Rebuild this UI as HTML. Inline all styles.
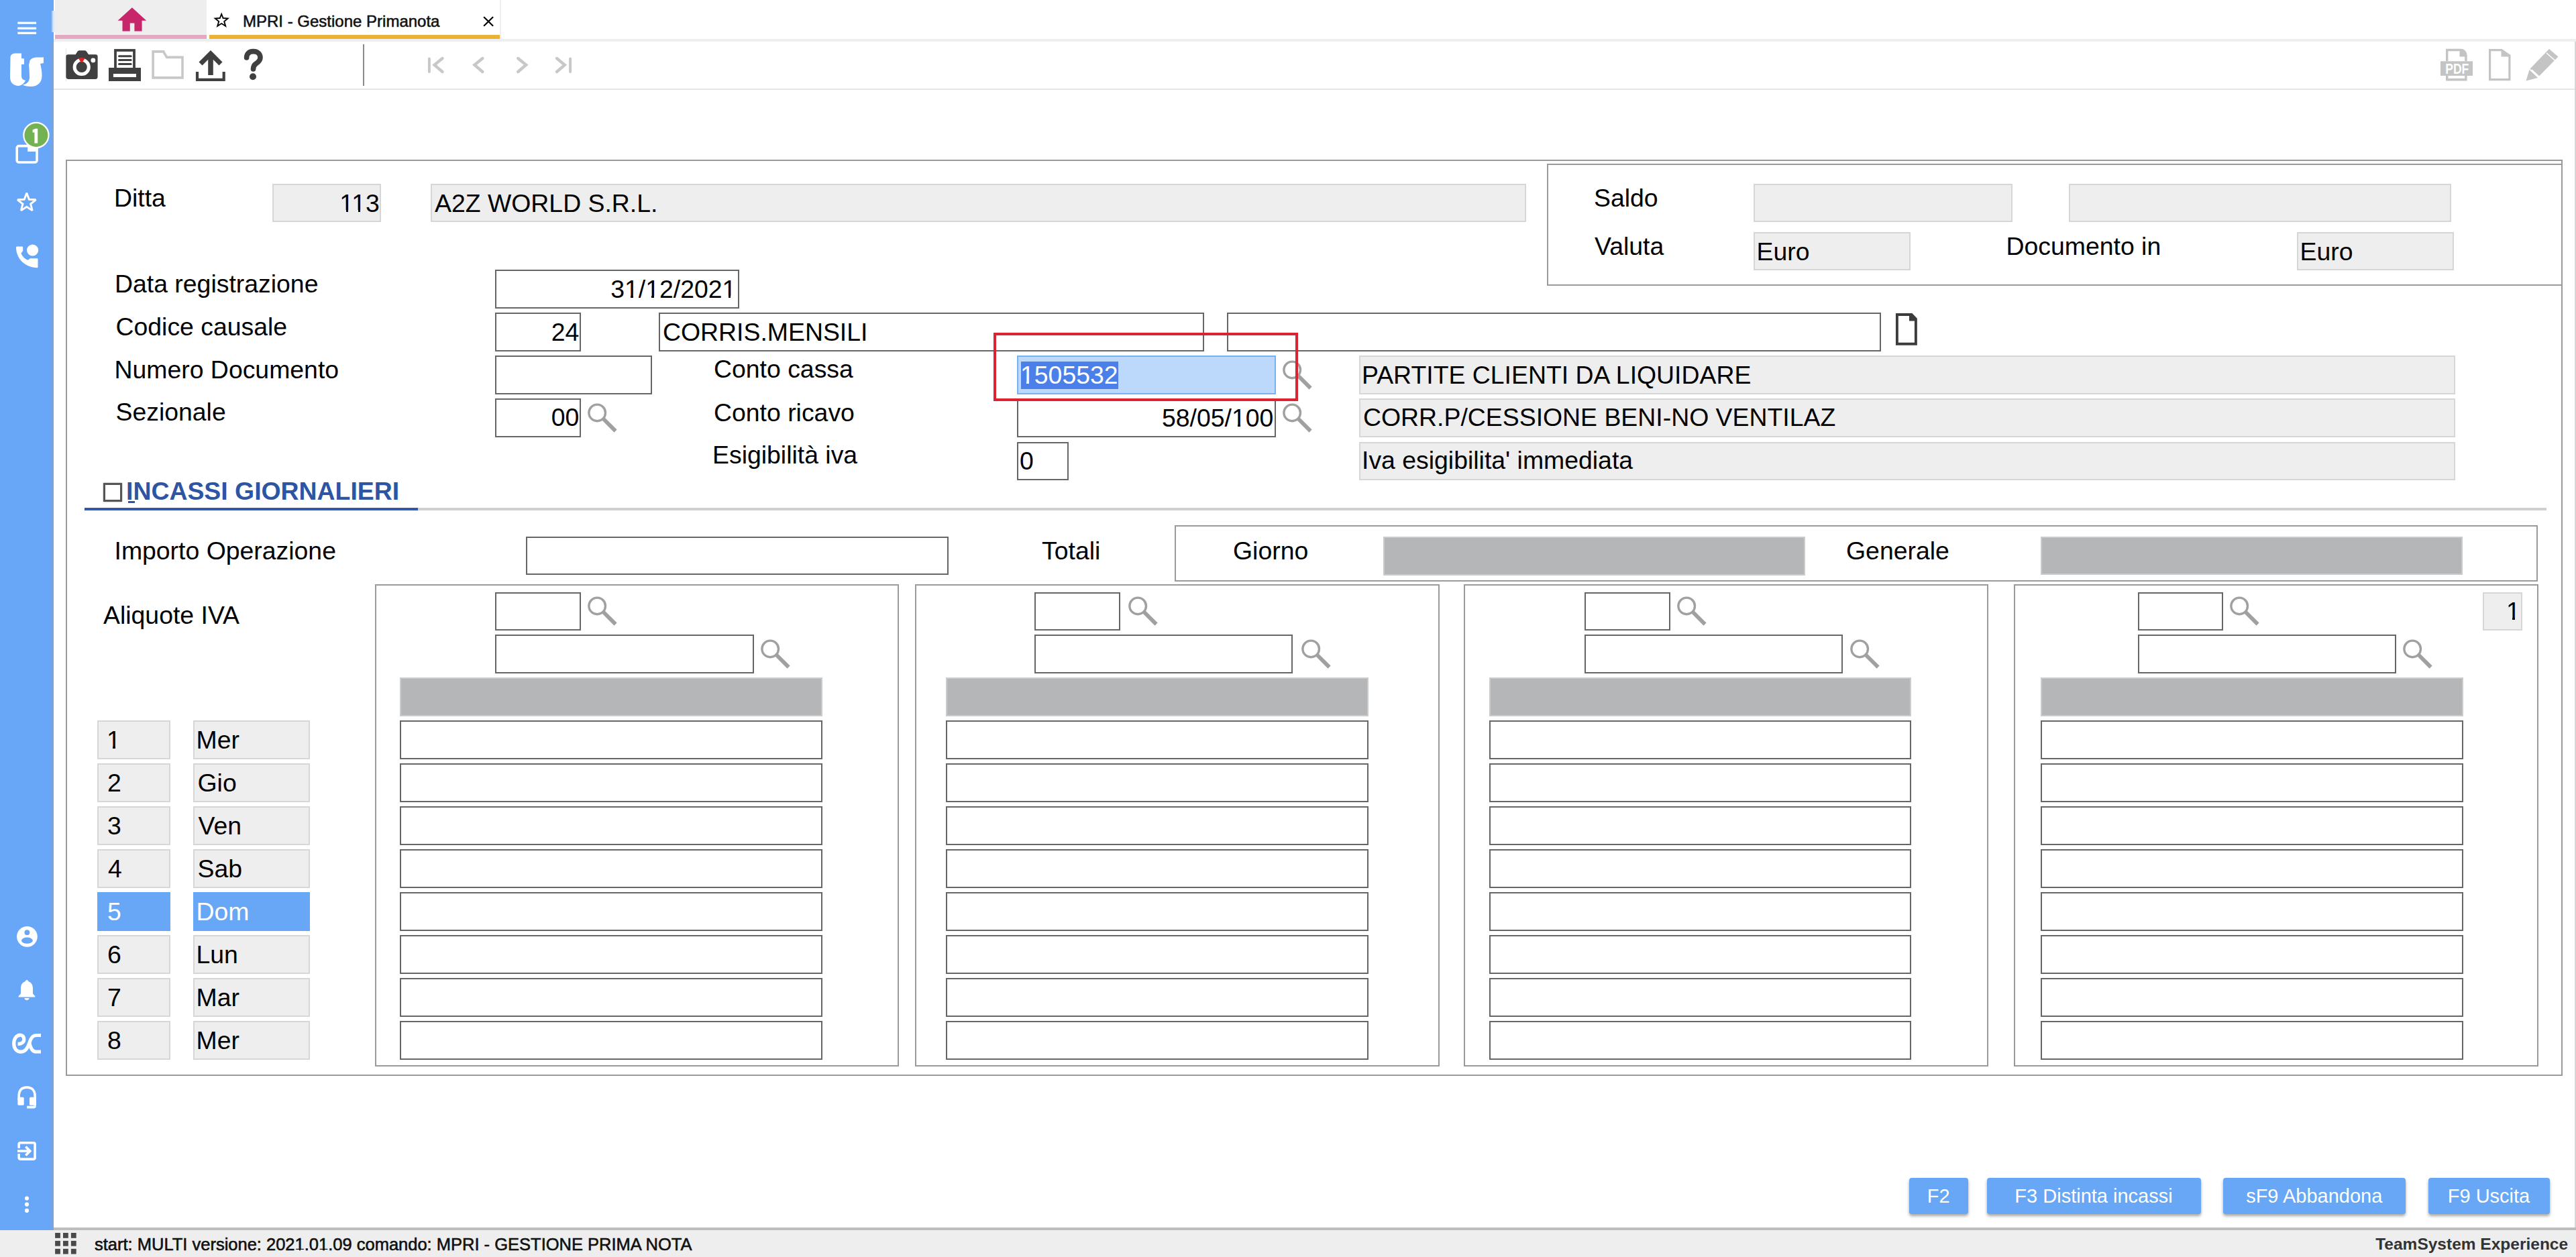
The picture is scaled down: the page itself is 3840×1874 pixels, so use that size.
<!DOCTYPE html><html><head><meta charset="utf-8"><style>
html,body{margin:0;padding:0;width:3840px;height:1874px;overflow:hidden;background:#fff;position:relative;font-family:"Liberation Sans",sans-serif}
div{position:absolute;box-sizing:border-box}
.t{white-space:pre;line-height:1}
.ig{background:#eeeeee;border:2px solid #d6d6d6}
.iw{background:#fff;border:2px solid #666}
.gb{background:#b4b6b7;border:2px solid #c9cbcc}
.pn{border:2px solid #9a9a9a}
.btn{background:#68a6f6;border-radius:4px;box-shadow:0 3px 4px rgba(0,0,0,0.35);color:#fff;font-size:29px;text-align:center;line-height:54px}
</style></head><body>
<div class="" style="left:0.0px;top:0.0px;width:80.0px;height:1834.0px;background:#68a6f7"></div>
<div class="" style="left:74.0px;top:62.0px;width:6.0px;height:1772.0px;background:linear-gradient(to right,rgba(104,166,247,0),#7ea4d2)"></div>
<div class="" style="left:76.0px;top:16.0px;width:6.0px;height:32.0px;background:linear-gradient(to right,#6aa6f3,#dceafa 60%,#eeeeee)"></div>
<div class="" style="left:80.0px;top:58.0px;width:3760.0px;height:4.0px;background:#eeeeee"></div>
<div class="" style="left:82.0px;top:0.0px;width:226.0px;height:58.0px;background:#eeeeee"></div>
<div class="" style="left:82.0px;top:52.0px;width:226.0px;height:6.0px;background:#e3a9c1"></div>
<div class="" style="left:312.0px;top:52.0px;width:434.0px;height:6.0px;background:#ebb233"></div>
<div class="" style="left:745.0px;top:0.0px;width:2.0px;height:58.0px;background:#efefef"></div>
<div class="" style="left:98.0px;top:72.0px;width:1.0px;height:49.0px;background:#e4e4e4"></div>
<div class="" style="left:80.0px;top:132.0px;width:3760.0px;height:2.0px;background:#e6e6e6"></div>
<div class="" style="left:541.0px;top:66.0px;width:2.0px;height:62.0px;background:#8a8a8a"></div>
<div class="" style="left:3837.5px;top:62.0px;width:2.5px;height:1769.0px;background:#d6d6d6"></div>
<div class="" style="left:0.0px;top:1833.5px;width:3840.0px;height:40.5px;background:#eeeeee"></div>
<div class="" style="left:80.0px;top:1830.0px;width:3760.0px;height:3.5px;background:#bdbdbd"></div>
<div class="pn" style="left:98.0px;top:238.0px;width:3722.0px;height:1366.0px;"></div>
<div class="pn" style="left:2306.0px;top:244.0px;width:1514.0px;height:182.0px;"></div>
<div class="t" style="left:170.0px;top:277.3px;font-size:37.4px;color:#000;font-weight:normal;">Ditta</div>
<div class="ig" style="left:406.0px;top:274.0px;width:162.0px;height:57.0px;"></div>
<div class="t" style="right:3274.2px;top:284.8px;font-size:37.4px;color:#000;font-weight:normal;">113</div>
<div style="left:507.87px;top:312.78px;width:7.67px;height:3.55px;background:#eeeeee"></div>
<div style="left:518.90px;top:312.78px;width:8.23px;height:3.55px;background:#eeeeee"></div>
<div style="left:525.89px;top:312.78px;width:7.67px;height:3.55px;background:#eeeeee"></div>
<div style="left:536.92px;top:312.78px;width:8.23px;height:3.55px;background:#eeeeee"></div>
<div class="ig" style="left:642.0px;top:274.0px;width:1633.0px;height:57.0px;"></div>
<div class="t" style="left:648.0px;top:284.8px;font-size:37.4px;color:#000;font-weight:normal;">A2Z WORLD S.R.L.</div>
<div class="t" style="left:2376.0px;top:276.8px;font-size:37.4px;color:#000;font-weight:normal;">Saldo</div>
<div class="t" style="left:2377.0px;top:348.8px;font-size:37.4px;color:#000;font-weight:normal;">Valuta</div>
<div class="ig" style="left:2614.0px;top:274.0px;width:386.0px;height:57.0px;"></div>
<div class="ig" style="left:3084.0px;top:274.0px;width:570.0px;height:57.0px;"></div>
<div class="ig" style="left:2614.0px;top:346.0px;width:234.0px;height:57.0px;"></div>
<div class="t" style="left:2618.5px;top:356.8px;font-size:37.4px;color:#000;font-weight:normal;">Euro</div>
<div class="t" style="left:2990.5px;top:348.8px;font-size:37.4px;color:#000;font-weight:normal;">Documento in</div>
<div class="ig" style="left:3424.0px;top:346.0px;width:234.0px;height:57.0px;"></div>
<div class="t" style="left:3428.5px;top:356.8px;font-size:37.4px;color:#000;font-weight:normal;">Euro</div>
<div class="t" style="left:171.0px;top:404.8px;font-size:37.4px;color:#000;font-weight:normal;">Data registrazione</div>
<div class="iw" style="left:738.0px;top:402.0px;width:364.0px;height:57.5px;"></div>
<div class="t" style="right:2742.7px;top:412.8px;font-size:37.4px;color:#000;font-weight:normal;">31/12/2021</div>
<div style="left:932.64px;top:440.78px;width:7.67px;height:3.55px;background:#fff"></div>
<div style="left:943.67px;top:440.78px;width:8.23px;height:3.55px;background:#fff"></div>
<div style="left:963.82px;top:440.78px;width:7.67px;height:3.55px;background:#fff"></div>
<div style="left:974.85px;top:440.78px;width:8.23px;height:3.55px;background:#fff"></div>
<div style="left:1078.18px;top:440.78px;width:7.67px;height:3.55px;background:#fff"></div>
<div style="left:1089.22px;top:440.78px;width:8.23px;height:3.55px;background:#fff"></div>
<div class="t" style="left:172.5px;top:468.8px;font-size:37.4px;color:#000;font-weight:normal;">Codice causale</div>
<div class="iw" style="left:738.0px;top:466.0px;width:128.0px;height:57.5px;"></div>
<div class="t" style="right:2976.7px;top:476.8px;font-size:37.4px;color:#000;font-weight:normal;">24</div>
<div class="iw" style="left:982.0px;top:466.0px;width:813.0px;height:57.5px;"></div>
<div class="t" style="left:988.0px;top:476.8px;font-size:37.4px;color:#000;font-weight:normal;">CORRIS.MENSILI</div>
<div class="iw" style="left:1828.5px;top:466.0px;width:975.0px;height:57.5px;"></div>
<div class="t" style="left:170.5px;top:532.8px;font-size:37.4px;color:#000;font-weight:normal;">Numero Documento</div>
<div class="iw" style="left:738.0px;top:530.0px;width:233.5px;height:57.5px;"></div>
<div class="t" style="left:1064.0px;top:532.3px;font-size:37.4px;color:#000;font-weight:normal;">Conto cassa</div>
<div class="" style="left:1516.0px;top:530.0px;width:385.5px;height:57.5px;background:#bcd8fb;border:2px solid #78b0f4"></div>
<div class="" style="left:1522.0px;top:538.5px;width:145.0px;height:41.5px;background:#4a80e8"></div>
<div class="t" style="left:1521.0px;top:540.8px;font-size:37.4px;color:#fff;font-weight:normal;">1505532</div>
<div style="left:1522.68px;top:568.78px;width:7.67px;height:3.55px;background:#4a80e8"></div>
<div style="left:1533.72px;top:568.78px;width:8.23px;height:3.55px;background:#4a80e8"></div>
<svg viewBox="0 0 44 44" width="44" height="44" style="position:absolute;left:1912px;top:537px"><circle cx="14.2" cy="14.4" r="12.3" fill="none" stroke="#a0a0a0" stroke-width="3.4"/><line x1="23.5" y1="23.5" x2="41.6" y2="41.6" stroke="#a0a0a0" stroke-width="5.8"/></svg>
<div class="ig" style="left:2026.0px;top:530.0px;width:1633.5px;height:57.5px;"></div>
<div class="t" style="left:2030.0px;top:541.1px;font-size:37.4px;color:#000;font-weight:normal;">PARTITE CLIENTI DA LIQUIDARE</div>
<div class="t" style="left:172.5px;top:596.3px;font-size:37.4px;color:#000;font-weight:normal;">Sezionale</div>
<div class="iw" style="left:738.0px;top:594.0px;width:128.0px;height:57.5px;"></div>
<div class="t" style="right:2976.7px;top:604.3px;font-size:37.4px;color:#000;font-weight:normal;">00</div>
<svg viewBox="0 0 44 44" width="44" height="44" style="position:absolute;left:876px;top:601px"><circle cx="14.2" cy="14.4" r="12.3" fill="none" stroke="#a0a0a0" stroke-width="3.4"/><line x1="23.5" y1="23.5" x2="41.6" y2="41.6" stroke="#a0a0a0" stroke-width="5.8"/></svg>
<div class="t" style="left:1064.0px;top:596.6px;font-size:37.4px;color:#000;font-weight:normal;">Conto ricavo</div>
<div class="iw" style="left:1516.0px;top:594.0px;width:385.5px;height:57.5px;"></div>
<div class="t" style="right:1941.7px;top:604.8px;font-size:37.4px;color:#000;font-weight:normal;">58/05/100</div>
<div style="left:1837.59px;top:632.78px;width:7.67px;height:3.55px;background:#fff"></div>
<div style="left:1848.63px;top:632.78px;width:8.23px;height:3.55px;background:#fff"></div>
<svg viewBox="0 0 44 44" width="44" height="44" style="position:absolute;left:1912px;top:601px"><circle cx="14.2" cy="14.4" r="12.3" fill="none" stroke="#a0a0a0" stroke-width="3.4"/><line x1="23.5" y1="23.5" x2="41.6" y2="41.6" stroke="#a0a0a0" stroke-width="5.8"/></svg>
<div class="ig" style="left:2026.0px;top:594.0px;width:1633.5px;height:57.5px;"></div>
<div class="t" style="left:2032.0px;top:604.3px;font-size:37.4px;color:#000;font-weight:normal;">CORR.P/CESSIONE BENI-NO VENTILAZ</div>
<div class="t" style="left:1062.0px;top:660.3px;font-size:37.4px;color:#000;font-weight:normal;">Esigibilità iva</div>
<div class="iw" style="left:1516.0px;top:658.5px;width:77.0px;height:57.5px;"></div>
<div class="t" style="left:1520.0px;top:668.8px;font-size:37.4px;color:#000;font-weight:normal;">0</div>
<div class="ig" style="left:2026.0px;top:658.5px;width:1633.5px;height:57.5px;"></div>
<div class="t" style="left:2030.0px;top:668.1px;font-size:37.4px;color:#000;font-weight:normal;">Iva esigibilita' immediata</div>
<div class="" style="left:1481.0px;top:496.0px;width:454.0px;height:101.5px;border:4px solid #dc2430"></div>
<svg viewBox="0 0 34 48" width="34" height="48" style="position:absolute;left:2825px;top:467px"><path d="M2.9 2 L24.6 2 L30.9 8.5 L30.9 45.8 L2.9 45.8 Z" fill="#fff" stroke="#3c3c3c" stroke-width="3.9"/><path d="M21 0.5 L21 11.6 L32.5 11.6 Z" fill="#3c3c3c"/></svg>
<div class="" style="left:154.0px;top:720.0px;width:28.0px;height:27.5px;border:3px solid #555;box-shadow:0 0 2px rgba(0,0,0,.4)"></div>
<div class="t" style="left:188.0px;top:713.5px;font-size:37.4px;color:#2d55a3;font-weight:bold;">INCASSI GIORNALIERI</div>
<div class="" style="left:191.0px;top:746.5px;width:9.5px;height:3.0px;background:#2d55a3"></div>
<div class="" style="left:623.0px;top:757.0px;width:3173.0px;height:3.5px;background:#cfcfcf"></div>
<div class="" style="left:126.0px;top:757.0px;width:497.0px;height:4.0px;background:#3458a4"></div>
<div class="t" style="left:170.5px;top:803.1px;font-size:37.4px;color:#000;font-weight:normal;">Importo Operazione</div>
<div class="iw" style="left:784.0px;top:800.0px;width:630.0px;height:57.0px;"></div>
<div class="t" style="left:1553.0px;top:803.3px;font-size:37.4px;color:#000;font-weight:normal;">Totali</div>
<div class="pn" style="left:1750.5px;top:782.5px;width:2032.5px;height:84.5px;"></div>
<div class="t" style="left:1838.0px;top:802.8px;font-size:37.4px;color:#000;font-weight:normal;">Giorno</div>
<div class="gb" style="left:2062.0px;top:800.0px;width:629.0px;height:58.0px;"></div>
<div class="t" style="left:2752.0px;top:802.8px;font-size:37.4px;color:#000;font-weight:normal;">Generale</div>
<div class="gb" style="left:3042.0px;top:800.0px;width:629.0px;height:57.0px;"></div>
<div class="t" style="left:154.0px;top:898.8px;font-size:37.4px;color:#000;font-weight:normal;">Aliquote IVA</div>
<div class="pn" style="left:558.5px;top:870.5px;width:781.5px;height:719.0px;"></div>
<div class="iw" style="left:738.0px;top:882.5px;width:127.5px;height:57.0px;"></div>
<svg viewBox="0 0 44 44" width="44" height="44" style="position:absolute;left:876px;top:888.5px"><circle cx="14.2" cy="14.4" r="12.3" fill="none" stroke="#a0a0a0" stroke-width="3.4"/><line x1="23.5" y1="23.5" x2="41.6" y2="41.6" stroke="#a0a0a0" stroke-width="5.8"/></svg>
<div class="iw" style="left:738.0px;top:946.0px;width:385.5px;height:57.5px;"></div>
<svg viewBox="0 0 44 44" width="44" height="44" style="position:absolute;left:1134px;top:953px"><circle cx="14.2" cy="14.4" r="12.3" fill="none" stroke="#a0a0a0" stroke-width="3.4"/><line x1="23.5" y1="23.5" x2="41.6" y2="41.6" stroke="#a0a0a0" stroke-width="5.8"/></svg>
<div class="gb" style="left:596.0px;top:1009.5px;width:630.0px;height:58.3px;"></div>
<div class="iw" style="left:596.0px;top:1074.2px;width:630.0px;height:57.5px;"></div>
<div class="iw" style="left:596.0px;top:1138.2px;width:630.0px;height:57.5px;"></div>
<div class="iw" style="left:596.0px;top:1202.2px;width:630.0px;height:57.5px;"></div>
<div class="iw" style="left:596.0px;top:1266.2px;width:630.0px;height:57.5px;"></div>
<div class="iw" style="left:596.0px;top:1330.2px;width:630.0px;height:57.5px;"></div>
<div class="iw" style="left:596.0px;top:1394.2px;width:630.0px;height:57.5px;"></div>
<div class="iw" style="left:596.0px;top:1458.2px;width:630.0px;height:57.5px;"></div>
<div class="iw" style="left:596.0px;top:1522.2px;width:630.0px;height:57.5px;"></div>
<div class="pn" style="left:1363.5px;top:870.5px;width:782.5px;height:719.0px;"></div>
<div class="iw" style="left:1542.0px;top:882.5px;width:127.5px;height:57.0px;"></div>
<svg viewBox="0 0 44 44" width="44" height="44" style="position:absolute;left:1681.5px;top:888.5px"><circle cx="14.2" cy="14.4" r="12.3" fill="none" stroke="#a0a0a0" stroke-width="3.4"/><line x1="23.5" y1="23.5" x2="41.6" y2="41.6" stroke="#a0a0a0" stroke-width="5.8"/></svg>
<div class="iw" style="left:1542.0px;top:946.0px;width:385.0px;height:57.5px;"></div>
<svg viewBox="0 0 44 44" width="44" height="44" style="position:absolute;left:1940px;top:953px"><circle cx="14.2" cy="14.4" r="12.3" fill="none" stroke="#a0a0a0" stroke-width="3.4"/><line x1="23.5" y1="23.5" x2="41.6" y2="41.6" stroke="#a0a0a0" stroke-width="5.8"/></svg>
<div class="gb" style="left:1409.5px;top:1009.5px;width:630.5px;height:58.3px;"></div>
<div class="iw" style="left:1409.5px;top:1074.2px;width:630.5px;height:57.5px;"></div>
<div class="iw" style="left:1409.5px;top:1138.2px;width:630.5px;height:57.5px;"></div>
<div class="iw" style="left:1409.5px;top:1202.2px;width:630.5px;height:57.5px;"></div>
<div class="iw" style="left:1409.5px;top:1266.2px;width:630.5px;height:57.5px;"></div>
<div class="iw" style="left:1409.5px;top:1330.2px;width:630.5px;height:57.5px;"></div>
<div class="iw" style="left:1409.5px;top:1394.2px;width:630.5px;height:57.5px;"></div>
<div class="iw" style="left:1409.5px;top:1458.2px;width:630.5px;height:57.5px;"></div>
<div class="iw" style="left:1409.5px;top:1522.2px;width:630.5px;height:57.5px;"></div>
<div class="pn" style="left:2182.0px;top:870.5px;width:781.5px;height:719.0px;"></div>
<div class="iw" style="left:2362.0px;top:882.5px;width:127.5px;height:57.0px;"></div>
<svg viewBox="0 0 44 44" width="44" height="44" style="position:absolute;left:2500px;top:888.5px"><circle cx="14.2" cy="14.4" r="12.3" fill="none" stroke="#a0a0a0" stroke-width="3.4"/><line x1="23.5" y1="23.5" x2="41.6" y2="41.6" stroke="#a0a0a0" stroke-width="5.8"/></svg>
<div class="iw" style="left:2362.0px;top:946.0px;width:385.0px;height:57.5px;"></div>
<svg viewBox="0 0 44 44" width="44" height="44" style="position:absolute;left:2758px;top:953px"><circle cx="14.2" cy="14.4" r="12.3" fill="none" stroke="#a0a0a0" stroke-width="3.4"/><line x1="23.5" y1="23.5" x2="41.6" y2="41.6" stroke="#a0a0a0" stroke-width="5.8"/></svg>
<div class="gb" style="left:2219.8px;top:1009.5px;width:629.7px;height:58.3px;"></div>
<div class="iw" style="left:2219.8px;top:1074.2px;width:629.7px;height:57.5px;"></div>
<div class="iw" style="left:2219.8px;top:1138.2px;width:629.7px;height:57.5px;"></div>
<div class="iw" style="left:2219.8px;top:1202.2px;width:629.7px;height:57.5px;"></div>
<div class="iw" style="left:2219.8px;top:1266.2px;width:629.7px;height:57.5px;"></div>
<div class="iw" style="left:2219.8px;top:1330.2px;width:629.7px;height:57.5px;"></div>
<div class="iw" style="left:2219.8px;top:1394.2px;width:629.7px;height:57.5px;"></div>
<div class="iw" style="left:2219.8px;top:1458.2px;width:629.7px;height:57.5px;"></div>
<div class="iw" style="left:2219.8px;top:1522.2px;width:629.7px;height:57.5px;"></div>
<div class="pn" style="left:3001.5px;top:870.5px;width:782.0px;height:719.0px;"></div>
<div class="iw" style="left:3186.5px;top:882.5px;width:127.5px;height:57.0px;"></div>
<svg viewBox="0 0 44 44" width="44" height="44" style="position:absolute;left:3324px;top:888.5px"><circle cx="14.2" cy="14.4" r="12.3" fill="none" stroke="#a0a0a0" stroke-width="3.4"/><line x1="23.5" y1="23.5" x2="41.6" y2="41.6" stroke="#a0a0a0" stroke-width="5.8"/></svg>
<div class="iw" style="left:3186.5px;top:946.0px;width:385.0px;height:57.5px;"></div>
<svg viewBox="0 0 44 44" width="44" height="44" style="position:absolute;left:3582px;top:953px"><circle cx="14.2" cy="14.4" r="12.3" fill="none" stroke="#a0a0a0" stroke-width="3.4"/><line x1="23.5" y1="23.5" x2="41.6" y2="41.6" stroke="#a0a0a0" stroke-width="5.8"/></svg>
<div class="gb" style="left:3042.0px;top:1009.5px;width:629.5px;height:58.3px;"></div>
<div class="iw" style="left:3042.0px;top:1074.2px;width:629.5px;height:57.5px;"></div>
<div class="iw" style="left:3042.0px;top:1138.2px;width:629.5px;height:57.5px;"></div>
<div class="iw" style="left:3042.0px;top:1202.2px;width:629.5px;height:57.5px;"></div>
<div class="iw" style="left:3042.0px;top:1266.2px;width:629.5px;height:57.5px;"></div>
<div class="iw" style="left:3042.0px;top:1330.2px;width:629.5px;height:57.5px;"></div>
<div class="iw" style="left:3042.0px;top:1394.2px;width:629.5px;height:57.5px;"></div>
<div class="iw" style="left:3042.0px;top:1458.2px;width:629.5px;height:57.5px;"></div>
<div class="iw" style="left:3042.0px;top:1522.2px;width:629.5px;height:57.5px;"></div>
<div class="ig" style="left:3700.5px;top:882.5px;width:59.0px;height:57.0px;"></div>
<div class="t" style="right:83.2px;top:892.8px;font-size:37.4px;color:#000;font-weight:normal;">1</div>
<div style="left:3737.68px;top:920.78px;width:7.67px;height:3.55px;background:#eeeeee"></div>
<div style="left:3748.72px;top:920.78px;width:8.23px;height:3.55px;background:#eeeeee"></div>
<div class="ig" style="left:144.5px;top:1074.2px;width:109.5px;height:57.5px;"></div>
<div class="ig" style="left:288.0px;top:1074.2px;width:174.0px;height:57.5px;"></div>
<div class="t" style="left:159.0px;top:1085.1px;font-size:37.4px;color:#000;font-weight:normal;">1</div>
<div style="left:160.68px;top:1112.78px;width:7.67px;height:3.55px;background:#eeeeee"></div>
<div style="left:171.72px;top:1112.78px;width:8.23px;height:3.55px;background:#eeeeee"></div>
<div class="t" style="left:292.5px;top:1085.1px;font-size:37.4px;color:#000;font-weight:normal;">Mer</div>
<div class="ig" style="left:144.5px;top:1138.2px;width:109.5px;height:57.5px;"></div>
<div class="ig" style="left:288.0px;top:1138.2px;width:174.0px;height:57.5px;"></div>
<div class="t" style="left:160.0px;top:1149.1px;font-size:37.4px;color:#000;font-weight:normal;">2</div>
<div class="t" style="left:294.5px;top:1149.1px;font-size:37.4px;color:#000;font-weight:normal;">Gio</div>
<div class="ig" style="left:144.5px;top:1202.2px;width:109.5px;height:57.5px;"></div>
<div class="ig" style="left:288.0px;top:1202.2px;width:174.0px;height:57.5px;"></div>
<div class="t" style="left:160.0px;top:1213.1px;font-size:37.4px;color:#000;font-weight:normal;">3</div>
<div class="t" style="left:295.5px;top:1213.1px;font-size:37.4px;color:#000;font-weight:normal;">Ven</div>
<div class="ig" style="left:144.5px;top:1266.2px;width:109.5px;height:57.5px;"></div>
<div class="ig" style="left:288.0px;top:1266.2px;width:174.0px;height:57.5px;"></div>
<div class="t" style="left:161.0px;top:1277.1px;font-size:37.4px;color:#000;font-weight:normal;">4</div>
<div class="t" style="left:294.5px;top:1277.1px;font-size:37.4px;color:#000;font-weight:normal;">Sab</div>
<div class="" style="left:144.5px;top:1330.2px;width:109.5px;height:57.5px;background:#68a6f6"></div>
<div class="" style="left:288.0px;top:1330.2px;width:174.0px;height:57.5px;background:#68a6f6"></div>
<div class="t" style="left:160.0px;top:1341.1px;font-size:37.4px;color:#fff;font-weight:normal;">5</div>
<div class="t" style="left:292.5px;top:1341.1px;font-size:37.4px;color:#fff;font-weight:normal;">Dom</div>
<div class="ig" style="left:144.5px;top:1394.2px;width:109.5px;height:57.5px;"></div>
<div class="ig" style="left:288.0px;top:1394.2px;width:174.0px;height:57.5px;"></div>
<div class="t" style="left:160.0px;top:1405.1px;font-size:37.4px;color:#000;font-weight:normal;">6</div>
<div class="t" style="left:292.5px;top:1405.1px;font-size:37.4px;color:#000;font-weight:normal;">Lun</div>
<div class="ig" style="left:144.5px;top:1458.2px;width:109.5px;height:57.5px;"></div>
<div class="ig" style="left:288.0px;top:1458.2px;width:174.0px;height:57.5px;"></div>
<div class="t" style="left:160.0px;top:1469.1px;font-size:37.4px;color:#000;font-weight:normal;">7</div>
<div class="t" style="left:292.5px;top:1469.1px;font-size:37.4px;color:#000;font-weight:normal;">Mar</div>
<div class="ig" style="left:144.5px;top:1522.2px;width:109.5px;height:57.5px;"></div>
<div class="ig" style="left:288.0px;top:1522.2px;width:174.0px;height:57.5px;"></div>
<div class="t" style="left:160.0px;top:1533.1px;font-size:37.4px;color:#000;font-weight:normal;">8</div>
<div class="t" style="left:292.5px;top:1533.1px;font-size:37.4px;color:#000;font-weight:normal;">Mer</div>
<div class="btn" style="left:2845.5px;top:1755.5px;width:88.5px;height:54px">F2</div>
<div class="btn" style="left:2961.5px;top:1755.5px;width:319.0px;height:54px">F3 Distinta incassi</div>
<div class="btn" style="left:3313.5px;top:1755.5px;width:272.5px;height:54px">sF9 Abbandona</div>
<div class="btn" style="left:3619.5px;top:1755.5px;width:181.0px;height:54px">F9 Uscita</div>
<svg viewBox="0 0 80 60" width="80" height="60" style="position:absolute;left:0px;top:0px;overflow:visible"><rect x="26.3" y="32.6" width="27.8" height="3.2" fill="#fff"/><rect x="26.3" y="40.6" width="27.8" height="3.2" fill="#fff"/><rect x="26.3" y="47.7" width="27.8" height="3.2" fill="#fff"/></svg>
<svg viewBox="0 0 80 80" width="80" height="80" style="position:absolute;left:0px;top:60px;overflow:visible"><path d="M15.5 26 C15.5 21 19 19.5 24 19.5 L32 19.5 L32 27 L36 27.5 L36 36 L32 36 L32 53 C32 57 34 59 38 60 C36 64 33 67 28 68 C20 68 15 63 15 55 Z" fill="#fff"/>
<path d="M44 33 C44 28 49 25.5 56 25.5 L65 25.5 L65 34 L60 35 C61.5 41 62.5 46 62.5 53 C62.5 63 56 69 46 69 C40 69 36 68 34 66.5 C41 65 44 61 44 55 C44 48 43.5 41 43 37 Z" fill="#fff"/></svg>
<svg viewBox="0 0 80 80" width="80" height="80" style="position:absolute;left:0px;top:170px;overflow:visible"><rect x="25.2" y="47.6" width="29.8" height="24.4" rx="3" fill="none" stroke="#fff" stroke-width="3.6"/>
<rect x="41.2" y="47" width="14" height="9" fill="#fff"/>
<circle cx="53.9" cy="31.5" r="18.6" fill="#74b152" stroke="#fff" stroke-width="2.2"/>
<path d="M48.6 23.5 L53 21.8 L56.2 21.8 L56.2 43.6 L51.4 43.6 L51.4 27.5 L48.6 27.5 Z" fill="#fff"/></svg>
<svg viewBox="0 0 80 40" width="80" height="40" style="position:absolute;left:0px;top:280px;overflow:visible"><path d="M39.80 7.80 L43.39 17.26 L53.50 17.75 L45.60 24.09 L48.26 33.85 L39.80 28.30 L31.34 33.85 L34.00 24.09 L26.10 17.75 L36.21 17.26 Z" fill="none" stroke="#fff" stroke-width="2.9" stroke-linejoin="miter" stroke-miterlimit="2.2"/></svg>
<svg viewBox="0 0 80 45" width="80" height="45" style="position:absolute;left:0px;top:360px;overflow:visible"><circle cx="48.6" cy="13" r="8.6" fill="#fff"/>
<path d="M24 9 C24 8 25 7.6 26 7.6 L33 7.6 C33.8 7.6 34.2 8.2 34.2 9 L34.2 14 L31.5 17.5 C33 22 37 26 41.5 27.8 L45 25.3 L55.3 25.3 C56 25.3 56.5 25.8 56.5 26.5 L56.5 38 C56.5 38.8 56 39.2 55.3 39.2 C38 39 24 26 24 9 Z" fill="#fff"/></svg>
<svg viewBox="0 0 80 55" width="80" height="55" style="position:absolute;left:0px;top:1370px;overflow:visible"><circle cx="40.4" cy="26.3" r="15.4" fill="#fff"/>
<circle cx="40.4" cy="20.2" r="3.9" fill="#68a6f7"/>
<ellipse cx="40.4" cy="32.2" rx="8.4" ry="4.6" fill="#68a6f7"/></svg>
<svg viewBox="0 0 80 40" width="80" height="40" style="position:absolute;left:0px;top:1455px;overflow:visible"><path d="M40 6 C41.4 6 42.2 7 42.2 8.2 C47 9.5 49 13.5 49 18.5 L49 26.5 L52.3 30 L52.3 31.5 L27.6 31.5 L27.6 30 L31 26.5 L31 18.5 C31 13.5 33 9.5 37.8 8.2 C37.8 7 38.6 6 40 6 Z" fill="#fff"/>
<path d="M36.5 33 L43.5 33 C43.5 35 42 36 40 36 C38 36 36.5 35 36.5 33 Z" fill="#fff"/></svg>
<svg viewBox="0 0 80 40" width="80" height="40" style="position:absolute;left:0px;top:1535px;overflow:visible"><path d="M26.5 21.3 C32 21.3 35.8 19 35.8 14.5 C35.8 10.5 33.5 8.1 30 8.1 C24.5 8.1 20.7 13.5 20.7 21 C20.7 28.5 25 33.2 31 33.2 C38 33.2 41.5 27 43.8 19.7 C46 12 49 8.5 54 8.5 L61 8.5" fill="none" stroke="#fff" stroke-width="5.2"/>
<path d="M43.8 19.7 C45.5 28 48.5 33 54 33 L61 33" fill="none" stroke="#fff" stroke-width="5.2"/></svg>
<svg viewBox="0 0 80 50" width="80" height="50" style="position:absolute;left:0px;top:1610px;overflow:visible"><path d="M28.2 30 L28.2 24 C28.2 15 33 11.1 40.1 11.1 C47.2 11.1 52.1 15 52.1 24 L52.1 38.5" fill="none" stroke="#fff" stroke-width="3.6"/>
<rect x="26.4" y="25.8" width="9.3" height="12" rx="1.6" fill="#fff"/>
<rect x="44" y="25.8" width="9.9" height="12" rx="1.6" fill="#fff"/>
<path d="M40.2 40.6 L50 40.6 C51.5 40.6 52.1 40 52.1 38.5" fill="none" stroke="#fff" stroke-width="3.6"/></svg>
<svg viewBox="0 0 80 45" width="80" height="45" style="position:absolute;left:0px;top:1695px;overflow:visible"><path d="M28.2 16.8 L28.2 10.8 C28.2 9.6 29 8.8 30.2 8.8 L50.1 8.8 C51.3 8.8 52.1 9.6 52.1 10.8 L52.1 31.1 C52.1 32.3 51.3 33.1 50.1 33.1 L30.2 33.1 C29 33.1 28.2 32.3 28.2 31.1 L28.2 25" fill="none" stroke="#fff" stroke-width="3.6"/>
<path d="M26 21 L44 21 M38.3 14.5 L44.8 21 L38.3 27.5" fill="none" stroke="#fff" stroke-width="3.6"/></svg>
<svg viewBox="0 0 80 30" width="80" height="30" style="position:absolute;left:0px;top:1780px;overflow:visible"><circle cx="40" cy="6.5" r="3.1" fill="#fff"/><circle cx="40" cy="15.6" r="3.1" fill="#fff"/><circle cx="40" cy="24.8" r="3.1" fill="#fff"/></svg>
<svg viewBox="0 0 80 60" width="80" height="60" style="position:absolute;left:160px;top:0px;overflow:visible"><path d="M36.9 11.3 L58.2 30.7 L51.6 30.7 L51.6 46.6 L40.4 46.6 L40.4 34.5 L33.8 34.5 L33.8 46.6 L22.5 46.6 L22.5 30.7 L15.5 30.7 Z" fill="#c7266a"/></svg>
<svg viewBox="0 0 60 60" width="60" height="60" style="position:absolute;left:300px;top:0px;overflow:visible"><path d="M30.2 21 L32.6 27 L39.6 27.6 L34.2 32 L36.2 38.8 L30.2 35 L24.2 38.8 L26.2 32 L20.8 27.6 L27.8 27 Z" fill="none" stroke="#000" stroke-width="1.9" stroke-linejoin="miter"/></svg>
<svg viewBox="0 0 60 60" width="60" height="60" style="position:absolute;left:700px;top:0px;overflow:visible"><path d="M21.2 25.2 L35.1 38.8 M35.1 25.2 L21.2 38.8" stroke="#000" stroke-width="2.2"/></svg>
<svg viewBox="0 0 70 60" width="70" height="60" style="position:absolute;left:90px;top:66px;overflow:visible"><path d="M11.5 15.2 L22.6 15.2 L25.5 10.8 C26.5 9.6 27.5 9.3 29 9.3 L35.5 9.3 C37 9.3 38 9.6 39 10.8 L42 15.2 L52.6 15.2 C54.6 15.2 55.6 16.4 55.6 18.4 L55.6 48.6 C55.6 50.6 54.6 51.9 52.6 51.9 L11.5 51.9 C9.5 51.9 8.4 50.6 8.4 48.6 L8.4 18.4 C8.4 16.4 9.5 15.2 11.5 15.2 Z" fill="#404040"/>
<circle cx="31.7" cy="33.9" r="10.6" fill="none" stroke="#fff" stroke-width="5"/>
<path d="M26.5 20.6 L37 20.6 L33.6 25.6 L32.2 27.2 L31.2 27.2 L29.8 25.6 Z" fill="#e8201f"/>
<circle cx="48.8" cy="23.9" r="3.4" fill="#fff"/></svg>
<svg viewBox="0 0 70 60" width="70" height="60" style="position:absolute;left:150px;top:66px;overflow:visible"><rect x="22" y="9" width="28" height="29" fill="none" stroke="#404040" stroke-width="3.8"/>
<path d="M27.5 17.7 L45.2 17.7 M27.5 23.6 L45.2 23.6 M27.5 29.5 L45.2 29.5" stroke="#404040" stroke-width="3" stroke-linecap="round"/>
<path d="M12 35.1 L60 35.1 L60 55 L12 55 Z M18.9 44.1 L18.9 49.1 L53 49.1 L53 44.1 Z" fill="#404040" fill-rule="evenodd"/></svg>
<svg viewBox="0 0 60 60" width="60" height="60" style="position:absolute;left:220px;top:66px;overflow:visible"><path d="M8.1 10.9 L23.6 10.9 L28.6 19.4 L52 19.4 L52 49.9 L8.1 49.9 Z" fill="none" stroke="#c8c8c8" stroke-width="3.6" stroke-linejoin="miter"/></svg>
<svg viewBox="0 0 60 60" width="60" height="60" style="position:absolute;left:280px;top:66px;overflow:visible"><path d="M34 14 L34 46" stroke="#404040" stroke-width="7.6"/>
<path d="M34 9 L51.5 26.5 L46.5 31.5 L34 19 L21.5 31.5 L16.5 26.5 Z" fill="#404040"/>
<path d="M14 41 L14 52.8 L53.7 52.8 L53.7 41" fill="none" stroke="#404040" stroke-width="4.2"/></svg>
<svg viewBox="0 0 50 60" width="50" height="60" style="position:absolute;left:350px;top:66px;overflow:visible"><path d="M17.6 20 C17.6 13.5 22 10.6 27.5 10.6 C33.8 10.6 38 14.2 38 19.8 C38 25 34.5 27 31.5 29 C28.5 31 27.5 33 27.5 37" fill="none" stroke="#404040" stroke-width="7.6" stroke-linecap="round"/>
<circle cx="27" cy="48.2" r="5" fill="#404040"/></svg>
<svg viewBox="0 0 250 50" width="250" height="50" style="position:absolute;left:620px;top:70px;overflow:visible"><path d="M19.9 17.5 L19.9 37" stroke="#c8c8c8" stroke-width="4" stroke-linecap="round"/>
<path d="M39.5 17 L27.6 26.8 L39.5 37" fill="none" stroke="#c8c8c8" stroke-width="4.4" stroke-linecap="round"/>
<path d="M99.3 17 L87.4 26.8 L99.3 37" fill="none" stroke="#c8c8c8" stroke-width="4.4" stroke-linecap="round"/>
<path d="M152.2 17 L164.2 26.8 L152.2 37" fill="none" stroke="#c8c8c8" stroke-width="4.4" stroke-linecap="round"/>
<path d="M210 17 L221.8 26.8 L210 37" fill="none" stroke="#c8c8c8" stroke-width="4.4" stroke-linecap="round"/>
<path d="M230.1 17.5 L230.1 37" stroke="#c8c8c8" stroke-width="4" stroke-linecap="round"/></svg>
<svg viewBox="0 0 60 60" width="60" height="60" style="position:absolute;left:3630px;top:66px;overflow:visible"><path d="M17.7 25 L17.7 8.5 L38 8.5 C43 8.5 45.9 12 45.9 17 L45.9 25" fill="none" stroke="#c4c4c4" stroke-width="3.4"/>
<path d="M36.5 7 L36.5 18.5 L47.5 18.5 C47.5 12 43 7 36.5 7 Z" fill="#c4c4c4"/>
<rect x="8" y="25.3" width="48" height="21.6" fill="#c4c4c4"/>
<text x="32.8" y="44.3" font-family="Liberation Sans" font-weight="bold" font-size="22" fill="#fff" text-anchor="middle" textLength="35" lengthAdjust="spacingAndGlyphs">PDF</text>
<path d="M17.7 46.5 L17.7 52.8 L45.9 52.8 L45.9 46.5" fill="none" stroke="#c4c4c4" stroke-width="3.4"/></svg>
<svg viewBox="0 0 60 60" width="60" height="60" style="position:absolute;left:3700px;top:66px;overflow:visible"><path d="M11.6 8.6 L29 8.6 L40.9 16.8 L40.9 52.6 L11.6 52.6 Z" fill="none" stroke="#c4c4c4" stroke-width="3.2"/>
<path d="M28.5 7 L28.5 18.5 L42.5 18.5 Z" fill="#c4c4c4"/></svg>
<svg viewBox="0 0 60 60" width="60" height="60" style="position:absolute;left:3760px;top:66px;overflow:visible"><path d="M40 7 L53.5 18.5 L24.5 48 L11.5 36.5 Z" fill="#c4c4c4"/>
<path d="M36 13 L49 24.5 M14 38 L26 49" stroke="#fff" stroke-width="1.6"/>
<path d="M10.5 38 L23 50 L5.5 54.6 Z" fill="#c4c4c4"/></svg>
<svg viewBox="0 0 60 49" width="60" height="49" style="position:absolute;left:70px;top:1825px;overflow:visible"><rect x="12.1" y="13.0" width="7.8" height="7.8" fill="#4a4a4a"/><rect x="12.1" y="24.9" width="7.8" height="7.8" fill="#4a4a4a"/><rect x="12.1" y="36.8" width="7.8" height="7.8" fill="#4a4a4a"/><rect x="24.0" y="13.0" width="7.8" height="7.8" fill="#4a4a4a"/><rect x="24.0" y="24.9" width="7.8" height="7.8" fill="#4a4a4a"/><rect x="24.0" y="36.8" width="7.8" height="7.8" fill="#4a4a4a"/><rect x="35.9" y="13.0" width="7.8" height="7.8" fill="#4a4a4a"/><rect x="35.9" y="24.9" width="7.8" height="7.8" fill="#4a4a4a"/><rect x="35.9" y="36.8" width="7.8" height="7.8" fill="#4a4a4a"/></svg>
<div class="t" style="left:362.0px;top:19.7px;font-size:24px;color:#111;font-weight:normal;-webkit-text-stroke:0.55px #111">MPRI - Gestione Primanota</div>
<div class="t" style="left:141.0px;top:1843.4px;font-size:25.5px;color:#111;font-weight:normal;-webkit-text-stroke:0.6px #111">start: MULTI versione: 2021.01.09 comando: MPRI - GESTIONE PRIMA NOTA</div>
<div style="left:440.70px;top:1862.81px;width:5.23px;height:2.42px;background:#eeeeee"></div>
<div style="left:448.22px;top:1862.81px;width:5.61px;height:2.42px;background:#eeeeee"></div>
<div style="left:476.15px;top:1862.81px;width:5.23px;height:2.42px;background:#eeeeee"></div>
<div style="left:483.67px;top:1862.81px;width:5.61px;height:2.42px;background:#eeeeee"></div>
<div class="t" style="right:11.9px;top:1842.8px;font-size:24.5px;color:#333;font-weight:bold;font-weight:bold">TeamSystem Experience</div>
</body></html>
